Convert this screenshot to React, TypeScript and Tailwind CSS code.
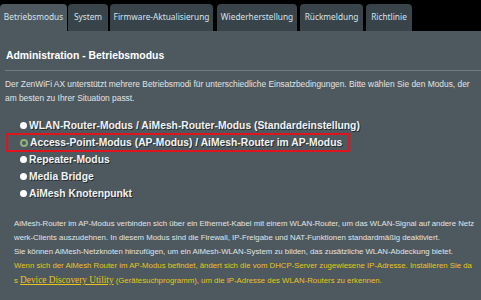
const tabs = [
  { label: "Betriebsmodus", cls: "w-[67px]" },
  { label: "System", cls: "w-[40px] ml-[1px]" },
  { label: "Firmware-Aktualisierung", cls: "w-[103px] ml-[2px]" },
  { label: "Wiederherstellung", cls: "w-[80px] ml-[4px]" },
  { label: "Rückmeldung", cls: "w-[63px] ml-[3px]" },
  { label: "Richtlinie", cls: "w-[46px] ml-[3px]" },
];

const modes = [
  "WLAN-Router-Modus / AiMesh-Router-Modus (Standardeinstellung)",
  "Access-Point-Modus (AP-Modus) / AiMesh-Router im AP-Modus",
  "Repeater-Modus",
  "Media Bridge",
  "AiMesh Knotenpunkt",
];

function Radio({ checked }: { checked: boolean }) {
  if (checked) {
    return (
      <span className="w-[8px] h-[8px] rounded-full bg-[#8fb37a] flex items-center justify-center shrink-0">
        <span className="w-[4px] h-[4px] rounded-full bg-[#4d595e]" />
      </span>
    );
  }
  return <span className="w-[7px] h-[7px] rounded-full bg-white shrink-0" />;
}

export default function App() {
  return (
    <div className="w-[481px] h-[300px] overflow-hidden bg-black font-['Liberation_Sans',Arial,sans-serif]">
      {/* Reiterleiste */}
      <div className="flex pt-[4px] h-[31px]">
        {tabs.map((t, i) => (
          <div
            key={t.label}
            className={`${t.cls} h-[27px] rounded-t-[4px] flex items-center justify-center whitespace-nowrap text-[8.3px] text-[#d5e4ec] font-['Noto_Sans',sans-serif] ${
              i === 0 ? "bg-[#4d595e]" : "bg-[#38434a]"
            }`}
          >
            {t.label}
          </div>
        ))}
      </div>

      <div className="bg-[#4d595e] h-[269px] pt-[18px]">
        <h1 className="pl-[6px] text-[10.4px] font-bold text-white leading-[14px]">
          Administration - Betriebsmodus
        </h1>
        <div className="h-px bg-[#717d82] mt-[7px] ml-[5px]" />

        <div className="mt-[6px] pl-[5px] text-[8.4px] leading-[14px] text-[#e0e4e6] whitespace-nowrap">
          <p>Der ZenWiFi AX unterstützt mehrere Betriebsmodi für unterschiedliche Einsatzbedingungen. Bitte wählen Sie den Modus, der</p>
          <p>am besten zu Ihrer Situation passt.</p>
        </div>

        <div className="mt-[12px] flex flex-col">
          {modes.map((m, i) => (
            <div
              key={m}
              className={`flex items-center gap-[2px] text-[10.3px] font-bold text-[#f2f2f2] whitespace-nowrap [text-shadow:1px_1px_0_#262d30] ${
                i === 1
                  ? "h-[19px] -my-[1px] border-2 border-[#e0141c] w-[344px] ml-[6px] pl-[12px]"
                  : "h-[17px] pl-[20px]"
              }`}
            >
              <Radio checked={i === 1} />
              <span>{m}</span>
            </div>
          ))}
        </div>

        <div className="mt-[15px] pl-[14px] text-[7.8px] leading-[14px] whitespace-nowrap">
          <p className="text-[#e0e4e6]">
            AiMesh-Router im AP-Modus verbinden sich über ein Ethernet-Kabel mit einem WLAN-Router, um das WLAN-Signal auf andere Netz
          </p>
          <p className="text-[#e0e4e6]">
            werk-Clients auszudehnen. In diesem Modus sind die Firewall, IP-Freigabe und NAT-Funktionen standardmäßig deaktiviert.
          </p>
          <p className="text-[#e0e4e6]">
            Sie können AiMesh-Netzknoten hinzufügen, um ein AiMesh-WLAN-System zu bilden, das zusätzliche WLAN-Abdeckung bietet.
          </p>
          <p className="text-[#e8c51a]">
            Wenn sich der AiMesh Router im AP-Modus befindet, ändert sich die vom DHCP-Server zugewiesene IP-Adresse. Installieren Sie da
          </p>
          <p className="text-[#e8c51a]">
            s{" "}
            <span className="underline font-['Liberation_Serif',serif] text-[9.3px]">Device Discovery Utility</span> (Gerätesuchprogramm), um die IP-Adresse des WLAN-Routers zu erkennen.
          </p>
        </div>
      </div>
    </div>
  );
}
